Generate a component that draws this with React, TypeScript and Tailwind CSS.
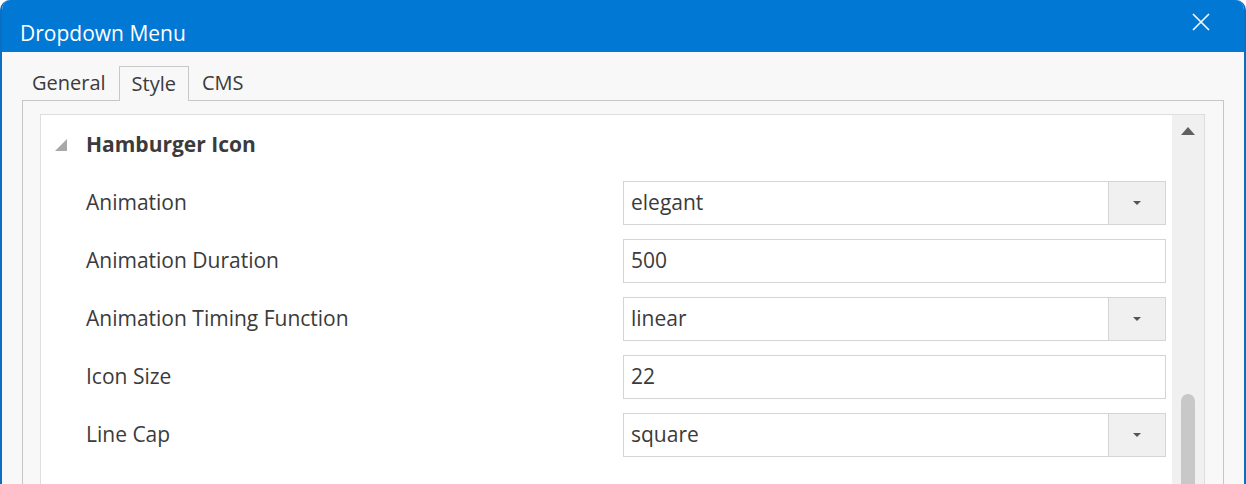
import React from "react";

const font = { fontFamily: '"Open Sans", "Noto Sans", sans-serif' };

function Row({ label, value, select }: { label: string; value: string; select?: boolean }) {
  return (
    <div className="flex h-[58px] items-center">
      <div className="w-[582px] pl-[45px] text-[21px] text-[#3b3b3b]">{label}</div>
      <div className="flex h-[44px] w-[543px] border border-[#d4d4d4] bg-white">
        <div className="flex flex-1 items-center pl-[7px] text-[21px] text-[#3b3b3b]">{value}</div>
        {select && (
          <div className="-my-px -mr-px flex w-[58px] items-center justify-center border border-[#d4d4d4] bg-[#f0f0f0]">
            <svg width="10" height="6" viewBox="0 0 10 6">
              <path d="M1 1 L9 1 L5 5 Z" fill="#555" />
            </svg>
          </div>
        )}
      </div>
    </div>
  );
}

export default function App() {
  return (
    <div className="h-[484px] w-[1246px] overflow-hidden bg-white" style={font}>
      <div className="flex h-full flex-col overflow-hidden rounded-t-[10px] border-x-2 border-[#0a6fc2] bg-[#f8f8f8]">
        <div className="flex h-[52px] shrink-0 items-start justify-between bg-[#0078d4] pl-[18px] pr-[34px]">
          <span className="pt-[19px] text-[21px] leading-[28px] text-white">Dropdown Menu</span>
          <svg width="18" height="18" viewBox="0 0 18 18" className="mt-[13px]">
            <path d="M1 1 L17 17 M17 1 L1 17" stroke="white" strokeWidth="1.6" />
          </svg>
        </div>
        <div className="flex flex-1 flex-col px-[20px] pt-[14px]">
          <div className="flex h-[34px] items-end text-[20px] text-[#3b3b3b]">
            <div className="flex h-[34px] items-center pl-[10px] pr-[13px]">General</div>
            <div className="relative z-10 -mb-px flex h-[35px] items-center border border-b-0 border-[#c8c8c8] bg-[#f8f8f8] px-[12px]">
              Style
            </div>
            <div className="flex h-[34px] items-center px-[13px]">CMS</div>
          </div>
          <div className="flex flex-1 border border-[#c6c6c6] pl-[17px] pr-[18px] pt-[13px]">
            <div className="flex flex-1 border border-[#dedede]">
              <div className="flex-1 bg-white">
                <div className="flex h-[59px] items-center">
                  <svg width="12" height="12" viewBox="0 0 12 12" className="ml-[14px] mr-[19px]">
                    <path d="M12 0 L12 12 L0 12 Z" fill="#a8a8a8" />
                  </svg>
                  <span className="text-[21px] font-bold text-[#3b3b3b]">Hamburger Icon</span>
                </div>
                <Row label="Animation" value="elegant" select />
                <Row label="Animation Duration" value="500" />
                <Row label="Animation Timing Function" value="linear" select />
                <Row label="Icon Size" value="22" />
                <Row label="Line Cap" value="square" select />
              </div>
              <div className="flex w-[32px] flex-col items-center bg-[#f0f0f0]">
                <svg width="16" height="10" viewBox="0 0 16 10" className="mt-[11px]">
                  <path d="M8 1 L15 9 L1 9 Z" fill="#606060" />
                </svg>
                <div className="mt-[258px] h-[120px] w-[14px] rounded-full bg-[#c8c8c8]" />
              </div>
            </div>
          </div>
        </div>
      </div>
    </div>
  );
}
